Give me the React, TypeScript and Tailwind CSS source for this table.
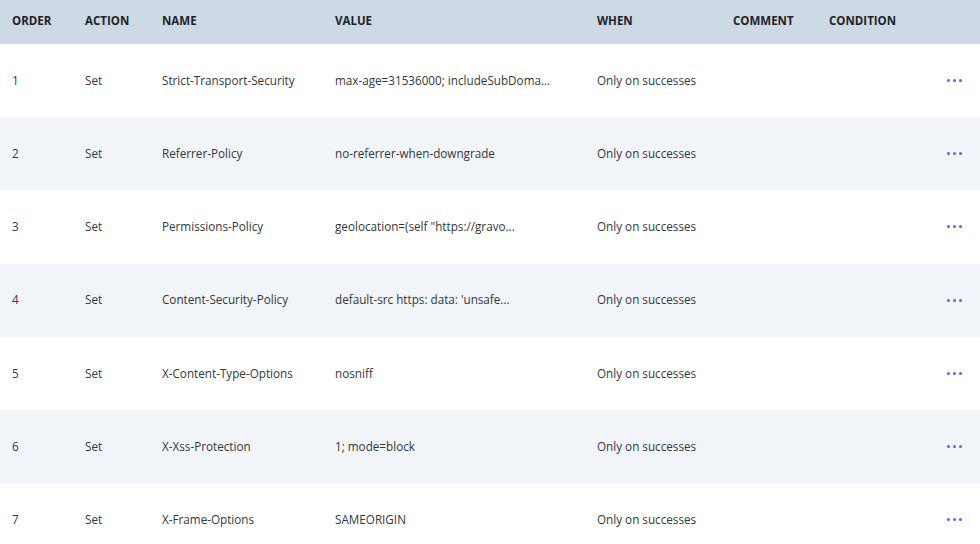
import React from "react";

type Row = {
  order: number;
  action: string;
  name: string;
  value: string;
  when: string;
};

const rows: Row[] = [
  { order: 1, action: "Set", name: "Strict-Transport-Security", value: "max-age=31536000; includeSubDoma...", when: "Only on successes" },
  { order: 2, action: "Set", name: "Referrer-Policy", value: "no-referrer-when-downgrade", when: "Only on successes" },
  { order: 3, action: "Set", name: "Permissions-Policy", value: "geolocation=(self \"https://gravo...", when: "Only on successes" },
  { order: 4, action: "Set", name: "Content-Security-Policy", value: "default-src https: data: 'unsafe...", when: "Only on successes" },
  { order: 5, action: "Set", name: "X-Content-Type-Options", value: "nosniff", when: "Only on successes" },
  { order: 6, action: "Set", name: "X-Xss-Protection", value: "1; mode=block", when: "Only on successes" },
  { order: 7, action: "Set", name: "X-Frame-Options", value: "SAMEORIGIN", when: "Only on successes" },
];

const cols = "grid grid-cols-[73px_77px_173px_262px_136px_96px_1fr_40px] items-center pl-3 pr-[18px]";

function MoreDots() {
  return (
    <button type="button" className="flex items-center justify-end gap-[3px] w-full">
      <span className="w-[3px] h-[3px] rounded-full bg-[#6c5cf0]" />
      <span className="w-[3px] h-[3px] rounded-full bg-[#6c5cf0]" />
      <span className="w-[3px] h-[3px] rounded-full bg-[#6c5cf0]" />
    </button>
  );
}

export default function App() {
  return (
    <div className="w-[980px] h-[544px] overflow-hidden bg-white font-['Open_Sans',sans-serif]">
      {/* Cabecera */}
      <div className={`${cols} h-[44px] pb-[2px] bg-[#cdd9e5] text-[11.5px] font-bold text-[#1f2329]`}>
        <div>ORDER</div>
        <div>ACTION</div>
        <div>NAME</div>
        <div>VALUE</div>
        <div>WHEN</div>
        <div>COMMENT</div>
        <div>CONDITION</div>
        <div />
      </div>

      {/* Filas */}
      {rows.map((r, i) => (
        <div
          key={r.order}
          className={`${cols} h-[73.2px] text-[11.7px] text-[#33363b] ${i % 2 === 1 ? "bg-[#f1f5f9]" : "bg-white"}`}
        >
          <div>{r.order}</div>
          <div>{r.action}</div>
          <div>{r.name}</div>
          <div className="whitespace-nowrap">{r.value}</div>
          <div>{r.when}</div>
          <div />
          <div />
          <MoreDots />
        </div>
      ))}
    </div>
  );
}
